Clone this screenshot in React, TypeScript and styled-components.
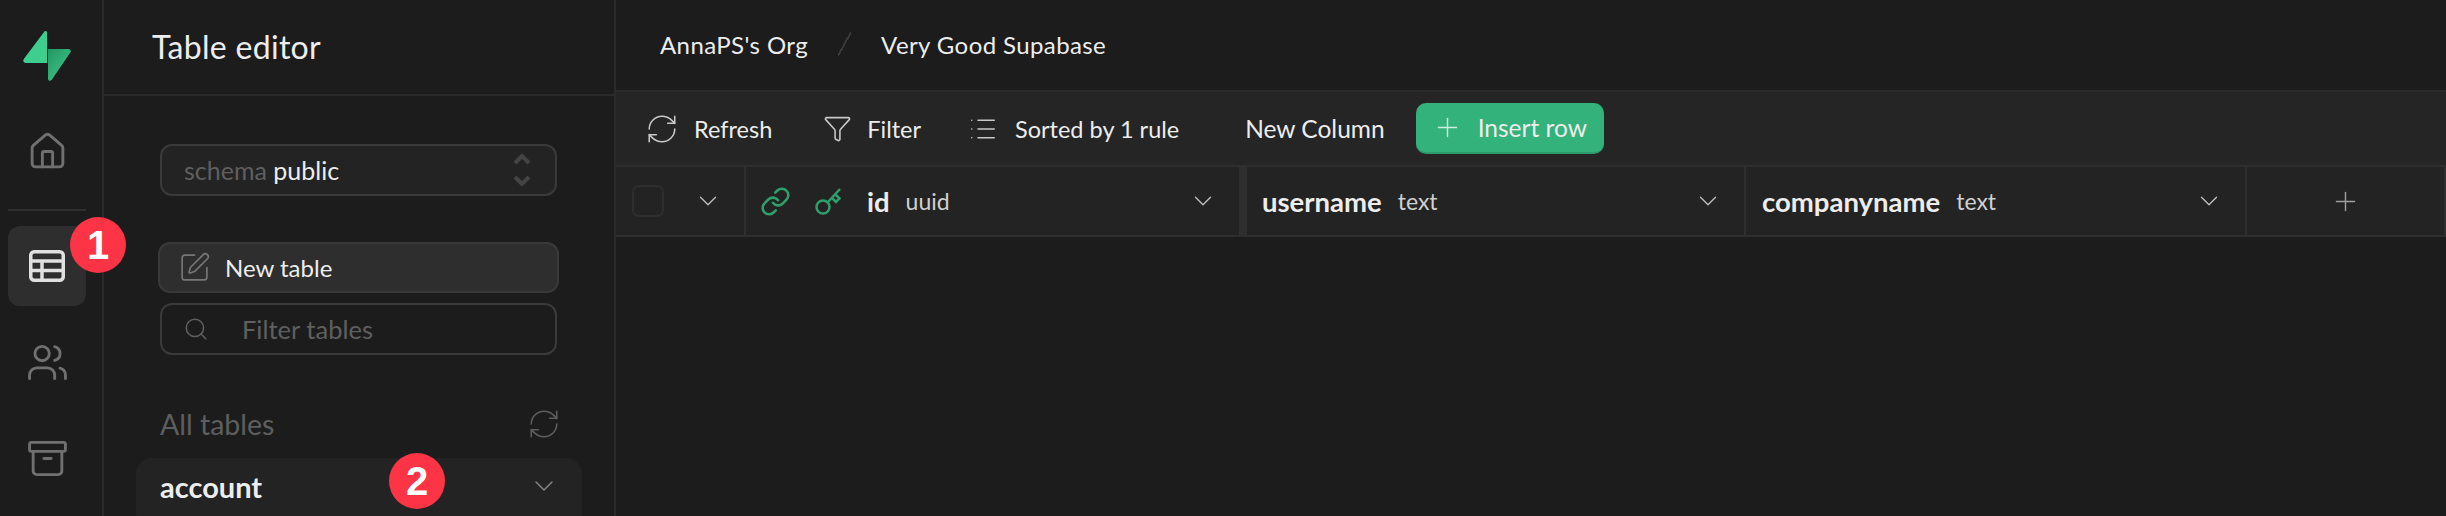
import { Archive, ChevronDown, Filter, House, Link, List, Plus, RefreshCw, Search, SquarePen, Users } from "lucide-react";
import styled, { createGlobalStyle } from "styled-components";

const GlobalStyle = createGlobalStyle`
  html, body {
    margin: 0;
    padding: 0;
    height: 100%;
    background: #1c1c1c;
    overflow: hidden;
  }
  * {
    box-sizing: border-box;
  }
  #root {
    height: 100%;
  }
`;

const Page = styled.div`
  display: flex;
  width: 2446px;
  height: 516px;
  overflow: hidden;
  background: #1c1c1c;
  color: #ededed;
  font-family: Lato, "Open Sans", sans-serif;
  font-size: 24px;
`;

const NavRail = styled.nav`
  position: relative;
  flex: 0 0 104px;
  display: flex;
  flex-direction: column;
  align-items: stretch;
  padding: 31px 16px 0 8px;
  border-right: 2px solid #2a2a2a;
`;

const LogoBox = styled.div`
  height: 50px;
  display: flex;
  justify-content: center;
  margin-bottom: 54px;
`;

const NavItem = styled.div<{ $active?: boolean; $gap?: number }>`
  flex: none;
  height: ${(p) => (p.$active ? 80 : 33)}px;
  display: flex;
  align-items: center;
  justify-content: center;
  margin-bottom: ${(p) => p.$gap ?? 0}px;
  border-radius: 12px;
  background: ${(p) => (p.$active ? "#2e2e2e" : "transparent")};
  color: ${(p) => (p.$active ? "#e0e0e0" : "#707070")};
`;

const NavDivider = styled.div`
  flex: none;
  height: 2px;
  margin-bottom: 15px;
  background: #2e2e2e;
`;

const Badge = styled.div<{ $left: number; $top: number }>`
  position: absolute;
  left: ${(p) => p.$left}px;
  top: ${(p) => p.$top}px;
  width: 56px;
  height: 56px;
  border-radius: 50%;
  display: flex;
  align-items: center;
  justify-content: center;
  background: #fc3445;
  color: #fff;
  font-family: "Liberation Sans", sans-serif;
  font-size: 40px;
  font-weight: 700;
  z-index: 2;
`;

const Sidebar = styled.aside`
  position: relative;
  flex: 0 0 512px;
  display: flex;
  flex-direction: column;
  border-right: 2px solid #2a2a2a;
`;

const SidebarHeader = styled.div`
  flex: none;
  height: 96px;
  display: flex;
  align-items: center;
  padding: 0 0 2px 48px;
  border-bottom: 2px solid #2a2a2a;
  font-size: 32px;
  letter-spacing: 0.3px;
  color: #ededed;
`;

const SidebarBody = styled.div`
  flex: none;
  display: flex;
  flex-direction: column;
  padding: 48px 0 0 56px;
`;

const Field = styled.div`
  width: 397px;
  height: 52px;
  display: flex;
  align-items: center;
  padding: 0 24px;
  border: 2px solid #3a3a3a;
  border-radius: 12px;
  color: #5f5f5f;
  font-size: 25px;
`;

const SchemaField = styled(Field)`
  justify-content: space-between;
  background: #232323;
  margin-bottom: 46px;
  padding-left: 22px;
`;

const FilterField = styled(Field)`
  gap: 33px;
  padding-left: 21px;
  font-size: 25.500px;
`;

const SchemaValue = styled.span`
  color: #ededed;
`;

const NewTableButton = styled.div`
  width: 401px;
  height: 51px;
  margin: 0 0 10px -2px;
  display: flex;
  align-items: center;
  gap: 14px;
  padding: 0 18px;
  background: #2e2e2e;
  border: 2px solid #393939;
  border-radius: 12px;
  color: #ededed;
  svg {
    color: #777;
  }
`;

const SectionRow = styled.div`
  width: 401px;
  height: 38px;
  margin-top: 50px;
  display: flex;
  align-items: center;
  justify-content: space-between;
  color: #5e5e5e;
  font-size: 28.500px;
`;

const TableRow = styled.div`
  width: 446px;
  height: 72px;
  margin: 15px 0 0 -24px;
  padding: 0 22px 16px 24px;
  display: flex;
  align-items: center;
  justify-content: space-between;
  background: #232323;
  border-radius: 16px;
  color: #ededed;
  font-size: 29px;
  font-weight: 700;
  svg {
    color: #858585;
  }
`;

const Main = styled.main`
  flex: 1;
  display: flex;
  flex-direction: column;
`;

const TopBar = styled.header`
  flex: none;
  height: 92px;
  display: flex;
  align-items: center;
  padding: 0 0 2px 44px;
  border-bottom: 2px solid #2a2a2a;
  font-size: 24px;
  letter-spacing: 0.4px;
`;

const Slash = styled.span`
  width: 13px;
  height: 24px;
  margin: 0 30px;
  background: linear-gradient(to bottom right, transparent 46%, #3a3a3a 46%, #3a3a3a 54%, transparent 54%);
`;

const Toolbar = styled.div`
  flex: none;
  height: 73px;
  display: flex;
  align-items: center;
  padding: 0 0 0 29px;
  background: #252525;
`;

const ToolButton = styled.div<{ $gap: number; $after: number; $large?: boolean }>`
  display: flex;
  align-items: center;
  gap: ${(p) => p.$gap}px;
  margin-right: ${(p) => p.$after}px;
  color: #ededed;
  font-size: ${(p) => (p.$large ? 24.5 : 23.5)}px;
  svg {
    color: #c8c8c8;
  }
`;

const InsertButton = styled.div`
  width: 188px;
  height: 51px;
  display: flex;
  align-items: center;
  gap: 15px;
  padding-left: 16px;
  background: #34b27b;
  border-bottom: 2px solid #2c9a6a;
  border-radius: 10px;
  color: #ededed;
  font-size: 24.500px;
  svg {
    color: #cfeedd;
  }
`;

const GridHeader = styled.div`
  flex: none;
  height: 72px;
  display: flex;
  background: #232323;
  border-top: 2px solid #2e2e2e;
  border-bottom: 2px solid #2e2e2e;
  border-right: 2px solid #2e2e2e;
  font-size: 23px;
`;

const SelectCell = styled.div`
  flex: 0 0 130px;
  display: flex;
  align-items: center;
  justify-content: space-between;
  padding: 0 21px 0 16px;
  border-right: 2px solid #2e2e2e;
  svg {
    color: #bdbdbd;
  }
`;

const Checkbox = styled.div`
  width: 32px;
  height: 32px;
  border: 2px solid #2e2e2e;
  border-radius: 7px;
`;

const ColumnCell = styled.div<{ $width: number; $pad: number; $thick?: boolean }>`
  flex: 0 0 ${(p) => p.$width}px;
  display: flex;
  align-items: center;
  padding: 0 21px 0 ${(p) => p.$pad}px;
  border-right: ${(p) => (p.$thick ? "8px" : "2px")} solid #2e2e2e;
  svg {
    color: #bdbdbd;
  }
`;

const KeyIcons = styled.div`
  display: flex;
  align-items: center;
  gap: 24px;
  margin-right: 26px;
  svg {
    color: #2d9e6c;
  }
`;

const ColumnName = styled.span`
  margin-right: 16px;
  font-size: 27.500px;
  font-weight: 700;
  color: #ededed;
`;

const ColumnType = styled.span`
  flex: 1;
  color: #d0d0d0;
`;

const AddCell = styled.div`
  flex: 1;
  display: flex;
  align-items: center;
  justify-content: center;
  svg {
    color: #a0a0a0;
  }
`;

const Logo = () => (
  <svg width="48" height="50" viewBox="0 0 48 50">
    <defs>
      <linearGradient id="bolt" x1="0" y1="0" x2="1" y2="1">
        <stop offset="0" stopColor="#249361" />
        <stop offset="1" stopColor="#3ecf8e" />
      </linearGradient>
    </defs>
    <path d="M24 18H45.500c2 0 3 2 1.800 3.600L28.600 49c-1.300 1.500-3.600.6-3.600-1.300V18z" fill="url(#bolt)" />
    <path d="M24 1.500c0-1.400-1.600-2-2.600-1L1 27.700C-.6 29.500.5 32 3 32h21z" fill="#3ecf8e" />
  </svg>
);

const TableIcon = () => (
  <svg width="36" height="32" viewBox="0 0 36 32" fill="none" stroke="currentColor" strokeWidth="3.500">
    <rect x="1.750" y="1.750" width="32.500" height="28.500" rx="3.500" />
    <path d="M1.750 11h32.500M1.750 20.500h32.500M13 11v19.500" />
  </svg>
);

const KeyIcon = () => (
  <svg width="26" height="30" viewBox="0 0 26 30" fill="none" stroke="currentColor" strokeWidth="2.500">
    <circle cx="8" cy="21" r="6.500" />
    <path d="M13 16L25 3M17 12l4 4 3.500-3.500-4-4" />
  </svg>
);

const ChevronPair = () => (
  <svg width="18" height="36" viewBox="0 0 18 36" fill="none" stroke="#444" strokeWidth="4">
    <path d="M2 11l7-7 7 7M2 25l7 7 7-7" />
  </svg>
);

const App = () => (
  <Page>
    <GlobalStyle />
    <NavRail>
      <LogoBox>
        <Logo />
      </LogoBox>
      <NavItem $gap={41}>
        <House size={41} strokeWidth={1.7} />
      </NavItem>
      <NavDivider />
      <NavItem $active $gap={40}>
        <TableIcon />
      </NavItem>
      <NavItem $gap={63}>
        <Users size={43} strokeWidth={1.6} />
      </NavItem>
      <NavItem>
        <Archive size={43} strokeWidth={1.6} />
      </NavItem>
      <Badge $left={70} $top={217}>1</Badge>
    </NavRail>
    <Sidebar>
      <SidebarHeader>Table editor</SidebarHeader>
      <SidebarBody>
        <SchemaField>
          <span>
            schema <SchemaValue>public</SchemaValue>
          </span>
          <ChevronPair />
        </SchemaField>
        <NewTableButton>
          <SquarePen size={33} strokeWidth={1.2} />
          New table
        </NewTableButton>
        <FilterField>
          <Search size={26} strokeWidth={1.4} />
          Filter tables
        </FilterField>
        <SectionRow>
          All tables
          <RefreshCw size={34} strokeWidth={1.1} />
        </SectionRow>
        <TableRow>
          account
          <ChevronDown size={32} strokeWidth={1.1} />
        </TableRow>
      </SidebarBody>
      <Badge $left={285} $top={453}>2</Badge>
    </Sidebar>
    <Main>
      <TopBar>
        AnnaPS's Org
        <Slash />
        Very Good Supabase
      </TopBar>
      <Toolbar>
        <ToolButton $gap={15} $after={51}>
          <RefreshCw size={34} strokeWidth={1.1} />
          Refresh
        </ToolButton>
        <ToolButton $gap={15} $after={47}>
          <Filter size={29} strokeWidth={1.3} />
          Filter
        </ToolButton>
        <ToolButton $gap={17} $after={66}>
          <List size={30} strokeWidth={1.2} />
          Sorted by 1 rule
        </ToolButton>
        <ToolButton $gap={0} $after={31} $large>
          New Column
        </ToolButton>
        <InsertButton>
          <Plus size={31} strokeWidth={1.1} />
          Insert row
        </InsertButton>
      </Toolbar>
      <GridHeader>
        <SelectCell>
          <Checkbox />
          <ChevronDown size={30} strokeWidth={1.1} />
        </SelectCell>
        <ColumnCell $width={501} $pad={14} $thick>
          <KeyIcons>
            <Link size={31} strokeWidth={2} />
            <KeyIcon />
          </KeyIcons>
          <ColumnName>id</ColumnName>
          <ColumnType>uuid</ColumnType>
          <ChevronDown size={30} strokeWidth={1.1} />
        </ColumnCell>
        <ColumnCell $width={499} $pad={15}>
          <ColumnName>username</ColumnName>
          <ColumnType>text</ColumnType>
          <ChevronDown size={30} strokeWidth={1.1} />
        </ColumnCell>
        <ColumnCell $width={501} $pad={16}>
          <ColumnName>companyname</ColumnName>
          <ColumnType>text</ColumnType>
          <ChevronDown size={30} strokeWidth={1.1} />
        </ColumnCell>
        <AddCell>
          <Plus size={31} strokeWidth={1.1} />
        </AddCell>
      </GridHeader>
    </Main>
  </Page>
);

export default App;
